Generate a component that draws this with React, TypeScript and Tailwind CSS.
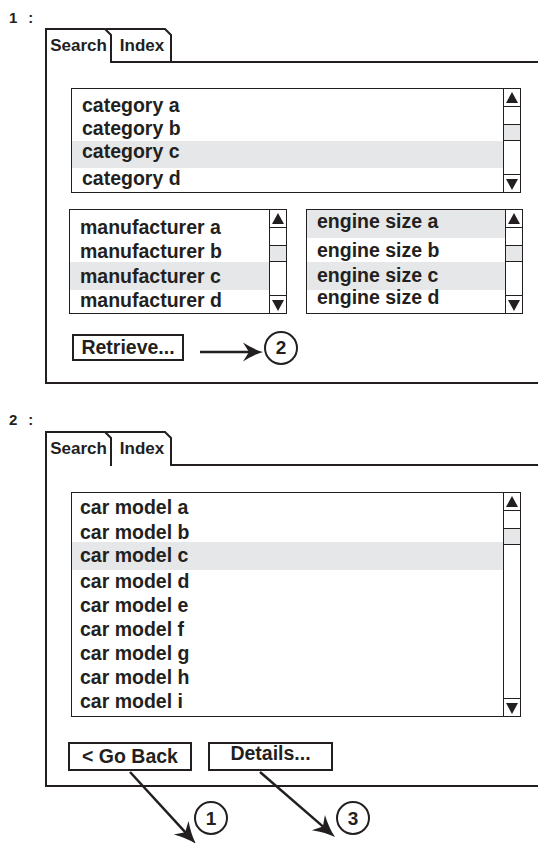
import React from "react";

const INK = "#231f20";

type Row = { t: string; cls: string; hl?: boolean };

function Tri({ down }: { down?: boolean }) {
  return (
    <svg width="12" height="12" viewBox="0 0 12 12">
      <polygon points={down ? "0,1 12,1 6,12" : "6,0 12,11 0,11"} fill={INK} />
    </svg>
  );
}

function Scrollbar() {
  return (
    <div className="w-[17px] shrink-0 border-l border-[#231f20] flex flex-col">
      <div className="h-[18px] shrink-0 border-b border-[#231f20] flex items-center justify-center">
        <Tri />
      </div>
      <div className="h-[17px] shrink-0" />
      <div className="h-[17px] shrink-0 bg-[#e6e7e8] border-y border-[#231f20]" />
      <div className="flex-1" />
      <div className="h-[18px] shrink-0 border-t border-[#231f20] flex items-center justify-center">
        <Tri down />
      </div>
    </div>
  );
}

function ListBox({ cls, rows, padCls, rowPl }: { cls: string; rows: Row[]; padCls: string; rowPl: string }) {
  return (
    <div className={`flex border border-[#231f20] overflow-hidden ${cls}`}>
      <div className={`flex-1 flex flex-col overflow-hidden ${padCls}`}>
        {rows.map((r) => (
          <div
            key={r.t}
            className={`flex items-center shrink-0 ${rowPl} ${r.cls} ${r.hl ? "bg-[#e6e7e8]" : ""}`}
          >
            <span className="leading-none text-[19.5px] whitespace-nowrap">{r.t}</span>
          </div>
        ))}
      </div>
      <Scrollbar />
    </div>
  );
}

function Tab({ label, w, path }: { label: string; w: string; path: string }) {
  return (
    <div className={`relative ${w} h-[35px] shrink-0`}>
      <svg className="absolute inset-0 overflow-visible" width="100%" height="35">
        <path d={path} fill="none" stroke={INK} strokeWidth="2" strokeLinejoin="miter" />
      </svg>
      <div className="relative text-center pt-[9px] text-[17px] leading-none">{label}</div>
    </div>
  );
}

function Label({ n, cls }: { n: string; cls: string }) {
  return (
    <div className={`flex pl-[9px] gap-[11px] text-[15px] leading-none ${cls}`}>
      <span>{n}</span>
      <span>:</span>
    </div>
  );
}

function Button({ label, cls }: { label: string; cls: string }) {
  return (
    <div className={`border-2 border-[#231f20] flex items-center justify-center shrink-0 ${cls}`}>
      <span className="text-[19.5px] leading-none whitespace-nowrap">{label}</span>
    </div>
  );
}

function Circle({ n, cls }: { n: string; cls: string }) {
  return (
    <div
      className={`w-[34px] h-[34px] rounded-full border-2 border-[#231f20] bg-white flex items-center justify-center shrink-0 ${cls}`}
    >
      <span className="text-[19px] leading-none">{n}</span>
    </div>
  );
}

function arrow(sx: number, sy: number, tx: number, ty: number, L = 22, W = 10, d = 6) {
  const dx = tx - sx;
  const dy = ty - sy;
  const len = Math.hypot(dx, dy);
  const ux = dx / len;
  const uy = dy / len;
  const nx = -uy;
  const ny = ux;
  const bx = tx - L * ux;
  const by = ty - L * uy;
  const p1x = bx + W * nx;
  const p1y = by + W * ny;
  const p3x = bx - W * nx;
  const p3y = by - W * ny;
  const p2x = tx - (L - d) * ux;
  const p2y = ty - (L - d) * uy;
  const c1x = tx - L * 0.45 * ux + W * 0.25 * nx;
  const c1y = ty - L * 0.45 * uy + W * 0.25 * ny;
  const c3x = tx - L * 0.45 * ux - W * 0.25 * nx;
  const c3y = ty - L * 0.45 * uy - W * 0.25 * ny;
  return {
    line: { x1: sx, y1: sy, x2: p2x + ux, y2: p2y + uy },
    head: `M${tx},${ty} Q${c1x},${c1y} ${p1x},${p1y} L${p2x},${p2y} L${p3x},${p3y} Q${c3x},${c3y} ${tx},${ty} Z`,
  };
}

function Arrow({ a }: { a: ReturnType<typeof arrow> }) {
  return (
    <g>
      <line {...a.line} stroke={INK} strokeWidth="2.5" />
      <path d={a.head} fill={INK} />
    </g>
  );
}

const categories: Row[] = [
  { t: "category a", cls: "h-[22px]" },
  { t: "category b", cls: "h-[24px]" },
  { t: "category c", cls: "h-[27px] pb-[6px]", hl: true },
  { t: "category d", cls: "h-[24px] pb-[3px]" },
];

const manufacturers: Row[] = [
  { t: "manufacturer a", cls: "h-[24px] pb-[3px]" },
  { t: "manufacturer b", cls: "h-[21px]" },
  { t: "manufacturer c", cls: "h-[28px] pt-[2px]", hl: true },
  { t: "manufacturer d", cls: "h-[23px] pb-[2px]" },
];

const engines: Row[] = [
  { t: "engine size a", cls: "h-[28px] pb-[5px]", hl: true },
  { t: "engine size b", cls: "h-[24px] pt-[2px]" },
  { t: "engine size c", cls: "h-[28px]", hl: true },
  { t: "engine size d", cls: "h-[23px] pb-[7px]" },
];

const cars: Row[] = [
  { t: "car model a", cls: "h-[24px]" },
  { t: "car model b", cls: "h-[22px] pt-[4px]" },
  { t: "car model c", cls: "h-[28px]", hl: true },
  { t: "car model d", cls: "h-[24px]" },
  { t: "car model e", cls: "h-[24px]" },
  { t: "car model f", cls: "h-[24px]" },
  { t: "car model g", cls: "h-[24px]" },
  { t: "car model h", cls: "h-[24px]" },
  { t: "car model i", cls: "h-[24px]" },
];

const retrieveArrow = arrow(0, 14, 63, 14, 20, 9.5, 6);
const backArrow = arrow(130, 772, 196, 844);
const detailsArrow = arrow(260, 772, 335, 837);

export default function App() {
  return (
    <div className="relative w-[538px] h-[843px] overflow-hidden bg-white text-[#231f20] font-bold font-['Liberation_Sans',Arial,sans-serif]">
      {/* Screen 1 */}
      <Label n="1" cls="h-[28px] pt-[10px]" />
      <div className="ml-[45px]">
        <div className="flex h-[35px]">
          <Tab label="Search" w="w-[67px]" path="M1,35 V1 H60 L66,7 V35" />
          <Tab label="Index" w="w-[60px]" path="M-6,1 H53 L59,7 V35 M-1,34 H60" />
          <div className="flex-1 border-b-2 border-[#231f20]" />
        </div>
        <div className="border-l-2 border-b-2 border-[#231f20] pl-[24px] pt-[25px] pb-[21px]">
          <ListBox cls="w-[450px] h-[105px]" rows={categories} padCls="pt-[6px]" rowPl="pl-[10px]" />
          <div className="mt-[16px] -ml-[2px] flex gap-[19px]">
            <ListBox cls="w-[218px] h-[105px]" rows={manufacturers} padCls="pt-[7px]" rowPl="pl-[10px]" />
            <ListBox cls="w-[217px] h-[105px]" rows={engines} padCls="pt-0" rowPl="pl-[10px]" />
          </div>
          <div className="mt-[20px] ml-[1px] flex items-center h-[27px]">
            <Button label="Retrieve..." cls="w-[112px] h-[27px]" />
            <svg className="ml-[16px] shrink-0 overflow-visible" width="64" height="20">
              <Arrow a={retrieveArrow} />
            </svg>
            <Circle n="2" cls="" />
          </div>
        </div>
      </div>

      {/* Screen 2 */}
      <Label n="2" cls="h-[47px] pt-[28px]" />
      <div className="ml-[45px]">
        <div className="flex h-[35px]">
          <Tab label="Search" w="w-[67px]" path="M1,35 V1 H60 L66,7 V35" />
          <Tab label="Index" w="w-[60px]" path="M-6,1 H53 L59,7 V35" />
          <div className="flex-1 border-b-2 border-[#231f20]" />
        </div>
        <div className="border-l-2 border-b-2 border-[#231f20] pl-[24px] pt-[26px] pb-[14px]">
          <ListBox cls="w-[450px] h-[225px]" rows={cars} padCls="pt-[3px]" rowPl="pl-[8px]" />
          <div className="mt-[25px] -ml-[3px] flex gap-[16px]">
            <Button label="< Go Back" cls="w-[124px] h-[29px]" />
            <Button label="Details..." cls="w-[125px] h-[29px] pb-[6px]" />
          </div>
        </div>
      </div>

      {/* Annotation arrows leaving screen 2 */}
      <svg className="absolute left-0 top-0 pointer-events-none" width="538" height="843">
        <Arrow a={backArrow} />
        <Arrow a={detailsArrow} />
      </svg>
      <Circle n="1" cls="absolute left-[194px] top-[801px]" />
      <Circle n="3" cls="absolute left-[336px] top-[801px]" />
    </div>
  );
}
